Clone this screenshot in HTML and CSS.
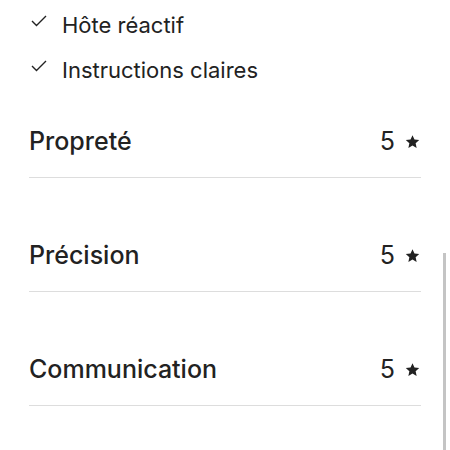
FILE: index.html
```html
<!DOCTYPE html>
<html>
<head>
<meta charset="utf-8">
<link rel="stylesheet" href="styles.css">
</head>
<body>
<div class="page">
  <ul class="checks">
    <li class="check"><svg class="tick" viewBox="0 0 16 12" width="16" height="12"><path d="M1 6 L5.5 10.5 L15 1" fill="none" stroke="#222" stroke-width="1.4"/></svg><span>Hôte réactif</span></li>
    <li class="check"><svg class="tick" viewBox="0 0 16 12" width="16" height="12"><path d="M1 6 L5.5 10.5 L15 1" fill="none" stroke="#222" stroke-width="1.4"/></svg><span>Instructions claires</span></li>
  </ul>
  <div class="ratings">
    <div class="rating"><span class="label">Propreté</span><span class="score">5<svg class="star" viewBox="0 0 32 32" width="15" height="15"><path d="M16 2.5l4.2 9.3 10.1 1.1-7.6 6.8 2.1 10-8.8-5.1-8.8 5.1 2.1-10-7.6-6.8 10.1-1.1z" fill="#222"/></svg></span></div>
    <div class="rating"><span class="label">Précision</span><span class="score">5<svg class="star" viewBox="0 0 32 32" width="15" height="15"><path d="M16 2.5l4.2 9.3 10.1 1.1-7.6 6.8 2.1 10-8.8-5.1-8.8 5.1 2.1-10-7.6-6.8 10.1-1.1z" fill="#222"/></svg></span></div>
    <div class="rating"><span class="label">Communication</span><span class="score">5<svg class="star" viewBox="0 0 32 32" width="15" height="15"><path d="M16 2.5l4.2 9.3 10.1 1.1-7.6 6.8 2.1 10-8.8-5.1-8.8 5.1 2.1-10-7.6-6.8 10.1-1.1z" fill="#222"/></svg></span></div>
  </div>
</div>
<div class="scrollbar"></div>
</body>
</html>
```
FILE: styles.css
```css
html, body { margin: 0; padding: 0; background: #fff; }
body { width: 450px; height: 450px; overflow: hidden; font-family: Inter, "Noto Sans", sans-serif; color: #222; position: relative; }
.page { padding: 0 29px; }
.checks { list-style: none; margin: 0; padding: 2px 0 0 2px; }
.check { display: flex; align-items: center; height: 45px; font-size: 22px; }
.check .tick { margin-right: 15px; margin-top: -7px; }
.ratings { display: flex; flex-direction: column; gap: 63px; padding-top: 35px; }
.rating { display: flex; justify-content: space-between; align-items: center; height: 28px; padding-bottom: 22px; border-bottom: 1px solid #dddddd; }
.label { font-size: 25px; font-weight: 500; line-height: 28px; }
.score { font-size: 25px; font-weight: 400; line-height: 28px; display: flex; align-items: center; padding-right: 1px; }
.star { margin-left: 10px; }
.scrollbar { position: absolute; left: 443px; top: 253px; width: 3px; height: 197px; background: #c4c4c4; }
```
